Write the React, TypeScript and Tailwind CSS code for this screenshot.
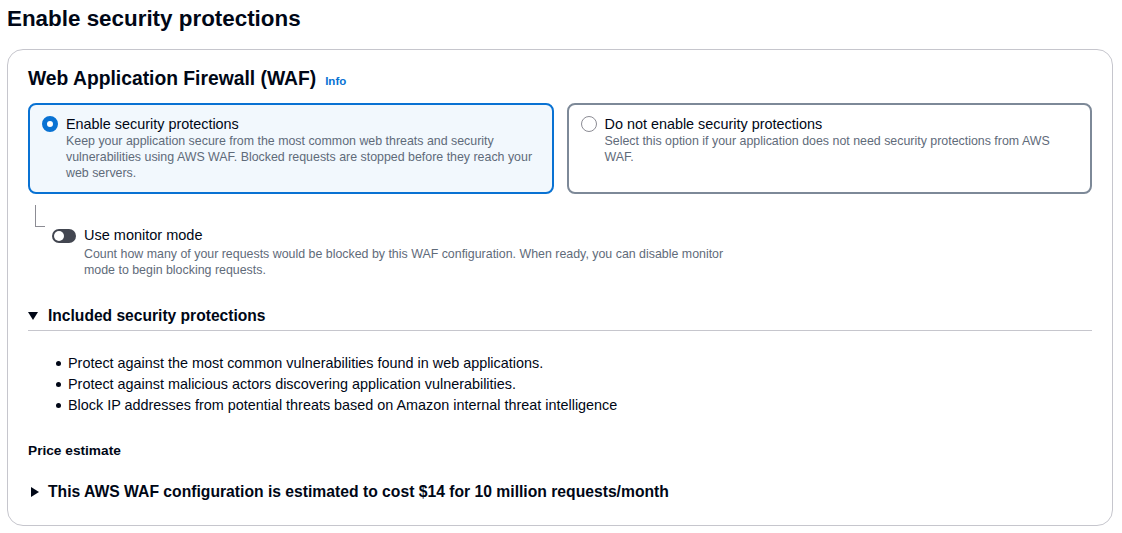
import React from 'react';

const bullets = [
  'Protect against the most common vulnerabilities found in web applications.',
  'Protect against malicious actors discovering application vulnerabilities.',
  'Block IP addresses from potential threats based on Amazon internal threat intelligence',
];

const RadioCard: React.FC<{
  selected?: boolean;
  label: string;
  description: string;
}> = ({ selected, label, description }) => (
  <div
    className={
      selected
        ? 'h-[91px] rounded-lg border-2 border-[#0972d3] bg-[#f2f8fd] pl-[12px] pr-[14px] pt-[9px]'
        : 'h-[91px] rounded-lg border-2 border-[#7d8998] bg-white pl-[12px] pr-[14px] pt-[9px]'
    }
  >
    <div className="flex items-start gap-[8px]">
      <span
        className={
          selected
            ? 'mt-[2px] h-4 w-4 shrink-0 rounded-full border-[5px] border-[#0972d3] bg-white'
            : 'mt-[2px] h-4 w-4 shrink-0 rounded-full border-[1.5px] border-[#8c8c94] bg-white'
        }
      />
      <div>
        <div className="text-[14.4px] leading-[20px] text-[#000716]">{label}</div>
        <div className="-mt-[1px] text-[12.4px] leading-[16px] text-[#5f6b7a]">{description}</div>
      </div>
    </div>
  </div>
);

// Triángulo del expandable (abierto / cerrado)
const Caret: React.FC<{ open?: boolean }> = ({ open }) =>
  open ? (
    <svg width="10" height="8" viewBox="0 0 10 8" className="shrink-0">
      <path d="M0 0 H10 L5 8 Z" fill="#000716" />
    </svg>
  ) : (
    <svg width="8" height="10" viewBox="0 0 8 10" className="shrink-0">
      <path d="M0 0 L8 5 L0 10 Z" fill="#000716" />
    </svg>
  );

const App: React.FC = () => {
  return (
    <div
      className="min-h-[533px] bg-white px-[7px] pt-[4px] text-[#000716]"
      style={{ fontFamily: '"Liberation Sans", Arial, sans-serif' }}
    >
      <h1 className="text-[22.4px] font-bold leading-[30px]">Enable security protections</h1>

      <div className="mt-[15px] h-[477px] w-[1106px] rounded-2xl border border-[#c6c6cd] px-[20px] pt-[16px]">
        {/* Header */}
        <div className="flex items-baseline gap-[9px]">
          <h2 className="text-[19.3px] font-bold leading-[26px]">Web Application Firewall (WAF)</h2>
          <span className="text-[11.5px] font-bold text-[#0972d3]">Info</span>
        </div>

        {/* Opciones */}
        <div className="mt-[11px] grid grid-cols-2 gap-[13px]">
          <RadioCard
            selected
            label="Enable security protections"
            description="Keep your application secure from the most common web threats and security vulnerabilities using AWS WAF. Blocked requests are stopped before they reach your web servers."
          />
          <RadioCard
            label="Do not enable security protections"
            description="Select this option if your application does not need security protections from AWS WAF."
          />
        </div>

        {/* Monitor mode */}
        <div className="ml-[7px] mt-[11px] h-[22px] w-[10px] border-b border-l border-[#8c8c94]" />
        <div className="-mt-[1px] ml-[24px] flex items-start gap-[8px]">
          <span className="mt-[3px] flex h-[14px] w-[24px] items-center rounded-full bg-[#424650] px-[2px]">
            <span className="h-[10px] w-[10px] rounded-full bg-white" />
          </span>
          <div className="max-w-[660px]">
            <div className="-mt-[1px] text-[14.5px] leading-[20px]">Use monitor mode</div>
            <div className="mt-[1px] text-[12.4px] leading-[16px] text-[#5f6b7a]">
              Count how many of your requests would be blocked by this WAF configuration. When ready, you can disable monitor
              mode to begin blocking requests.
            </div>
          </div>
        </div>

        {/* Included protections */}
        <div className="mt-[28px] flex items-center gap-[10px] border-b border-[#c6c6cd] pb-[4px]">
          <Caret open />
          <span className="text-[15.6px] font-bold leading-[20px]">Included security protections</span>
        </div>
        <ul className="mt-[24px] space-y-[5px] pl-[28px]">
          {bullets.map((b) => (
            <li key={b} className="flex items-center gap-[7px] text-[14.4px] leading-[16px]">
              <span className="h-[5px] w-[5px] rounded-full bg-[#000716]" />
              {b}
            </li>
          ))}
        </ul>

        <div className="mt-[28px] text-[13.7px] font-bold leading-[20px]">Price estimate</div>

        <div className="mt-[21px] flex items-center gap-[9px]">
          <span className="ml-[3px] flex">
            <Caret />
          </span>
          <span className="text-[15.7px] font-bold leading-[20px]">
            This AWS WAF configuration is estimated to cost $14 for 10 million requests/month
          </span>
        </div>
      </div>
    </div>
  );
};

export default App;
